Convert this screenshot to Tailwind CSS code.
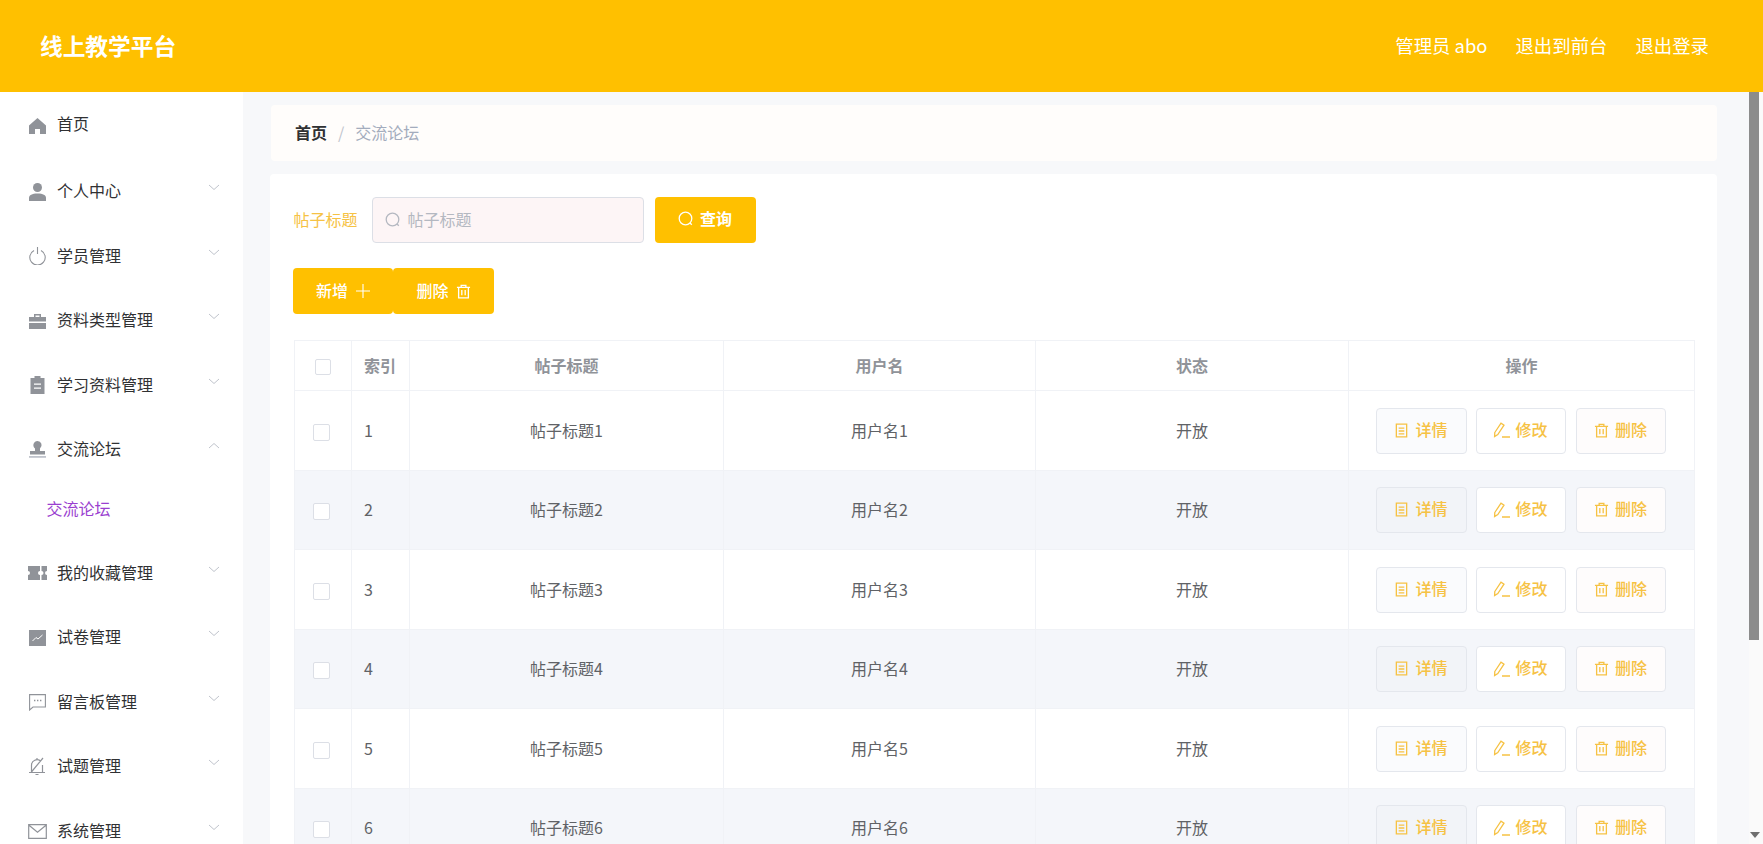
<!DOCTYPE html>
<html lang="zh">
<head>
<meta charset="utf-8">
<script src="https://cdn.jsdelivr.net/npm/@tailwindcss/browser@4"></script>
<title>线上教学平台</title>
</head>
<body class="m-0 h-[844px] overflow-hidden bg-[#f7f8fa] font-['Noto_Sans_CJK_SC','Noto_Sans',sans-serif] text-[16px]">
<svg class="hidden">
  <symbol id="doc" viewBox="0 0 16 16"><path d="M2.500 1.200h11v13.600h-11zM5 5.500h6M5 8.500h6M5 11.500h6" fill="none" stroke="currentColor" stroke-width="1.400"/></symbol>
  <symbol id="edit" viewBox="0 0 18 16"><path d="M1.800 10.500 8 1.200l3 2-6.200 9.300-3.200 2zM9 15h8" fill="none" stroke="currentColor" stroke-width="1.300"/></symbol>
  <symbol id="trash" viewBox="0 0 16 16"><path d="M1 3.500h14M5.500 3.500v-2h5v2M2.800 3.500v11.300h10.400V3.500M6.200 6.500v5.500M9.800 6.500v5.500" fill="none" stroke="currentColor" stroke-width="1.400"/></symbol>
  <symbol id="search" viewBox="0 0 16 16"><circle cx="7.500" cy="7.500" r="6.300" fill="none" stroke="currentColor" stroke-width="1.300"/><path d="m12 12 1.800 1.800" stroke="currentColor" stroke-width="1.300"/></symbol>
  <symbol id="chev" viewBox="0 0 12 7"><path d="M1 1l5 4.500L11 1" fill="none" stroke="currentColor" stroke-width="1"/></symbol>
</svg>

<header class="h-[92px] bg-[#ffc000] flex items-center justify-between pl-[40px] pr-[54px] text-white">
  <div class="text-[22.700px] font-bold mt-[1px]">线上教学平台</div>
  <div class="flex gap-[28px] text-[18.400px]"><span>管理员 abo</span><span>退出到前台</span><span>退出登录</span></div>
</header>

<div class="flex h-[752px]">
  <aside class="w-[243px] shrink-0 bg-white text-[#303133] overflow-hidden">
    <div class="h-[67px] pb-[2px] flex items-center pl-[29px]">
      <svg class="w-[17px] h-[17px] mr-[11px] mt-[2px] text-[#909399]" viewBox="0 0 17 17"><path d="M8.500 1 17 8.500V17h-6v-5H6v5H0V8.500z" fill="currentColor"/></svg><span class="mb-[3px]">首页</span>
    </div>
    <div class="h-[65px] flex items-center pl-[29px] pr-[23px]">
      <svg class="w-[17px] h-[18px] mr-[11px] text-[#909399]" viewBox="0 0 17 18"><circle cx="8.500" cy="4.500" r="4.500" fill="currentColor"/><path d="M0 18v-3c0-3 3-4.500 8.500-4.500S17 12 17 15v3z" fill="currentColor"/></svg>
      <span class="flex-1 mb-[3px]">个人中心</span><svg class="w-[12px] h-[7px] mb-[8px] text-[#c0c4cc]"><use href="#chev"/></svg>
    </div>
    <div class="h-[64px] flex items-center pl-[29px] pr-[23px]">
      <svg class="w-[17px] h-[18px] mr-[11px] text-[#909399]" viewBox="0 0 17 18"><path d="M5 3.500a7.700 7.700 0 1 0 7 0M8.500 0v7" fill="none" stroke="currentColor" stroke-width="1.100"/></svg>
      <span class="flex-1 mb-[3px]">学员管理</span><svg class="w-[12px] h-[7px] mb-[8px] text-[#c0c4cc]"><use href="#chev"/></svg>
    </div>
    <div class="h-[65px] flex items-center pl-[29px] pr-[23px]">
      <svg class="w-[17px] h-[16px] mr-[11px] text-[#909399]" viewBox="0 0 17 16"><path d="M5 4V1h7v3h-1.500V2.500h-4V4zM0 4h17v4.500H0zM0 10h17v6H0z" fill="currentColor"/></svg>
      <span class="flex-1 mb-[3px]">资料类型管理</span><svg class="w-[12px] h-[7px] mb-[8px] text-[#c0c4cc]"><use href="#chev"/></svg>
    </div>
    <div class="h-[64px] flex items-center pl-[29px] pr-[23px]">
      <svg class="w-[17px] h-[18px] mr-[11px] text-[#909399]" viewBox="0 0 16 18"><path d="M1 2h4V0h6v2h4v16H1zM4.500 7.500v1.300h7V7.500zm0 4v1.300h7v-1.300z" fill="currentColor" fill-rule="evenodd"/></svg>
      <span class="flex-1 mb-[3px]">学习资料管理</span><svg class="w-[12px] h-[7px] mb-[8px] text-[#c0c4cc]"><use href="#chev"/></svg>
    </div>
    <div class="h-[65px] flex items-center pl-[29px] pr-[23px]">
      <svg class="w-[17px] h-[17px] mr-[11px] text-[#909399]" viewBox="0 0 17 17"><path d="M8.500 0a4.200 4.200 0 0 1 2.500 7.500v2.500h5v3.500H1V10h5V7.500A4.200 4.200 0 0 1 8.500 0z" fill="currentColor"/><path d="M0 15h17v1.800H0z" fill="#c0c4cc"/></svg>
      <span class="flex-1 mb-[3px]">交流论坛</span><svg class="w-[12px] h-[7px] mb-[8px] text-[#c0c4cc] rotate-180"><use href="#chev"/></svg>
    </div>
    <div class="h-[59px] pb-[8px] flex items-center pl-[46.500px] text-[#9a3fd0]">交流论坛</div>
    <div class="h-[64px] flex items-center pl-[28px] pr-[23px]">
      <svg class="w-[19px] h-[14px] mr-[10px] text-[#909399]" viewBox="0 0 19 14"><path d="M0 0h12v5a2 2 0 0 0 0 4v5H0V9a2 2 0 0 0 0-4zM13.500 0H19v5a2 2 0 0 0 0 4v5h-5.500V9a2 2 0 0 0 0-4z" fill="currentColor"/></svg>
      <span class="flex-1 mb-[3px]">我的收藏管理</span><svg class="w-[12px] h-[7px] mb-[8px] text-[#c0c4cc]"><use href="#chev"/></svg>
    </div>
    <div class="h-[65px] flex items-center pl-[29px] pr-[23px]">
      <svg class="w-[17px] h-[16px] mr-[11px] text-[#909399]" viewBox="0 0 17 16"><rect width="17" height="16" fill="currentColor"/><path d="m3.500 11 3.500-3.500 2 1.500L13.500 5" fill="none" stroke="#fff" stroke-width="1"/></svg>
      <span class="flex-1 mb-[3px]">试卷管理</span><svg class="w-[12px] h-[7px] mb-[8px] text-[#c0c4cc]"><use href="#chev"/></svg>
    </div>
    <div class="h-[64px] flex items-center pl-[29px] pr-[23px]">
      <svg class="w-[17px] h-[17px] mr-[11px] text-[#909399]" viewBox="0 0 17 17"><path d="M.6.600h15.800v12.400H4l-3.400 3z" fill="none" stroke="currentColor" stroke-width="1.100"/><path d="M5 6.500h1.400M8 6.500h1.400M11 6.500h1.400" stroke="currentColor" stroke-width="1.400"/></svg>
      <span class="flex-1 mb-[3px]">留言板管理</span><svg class="w-[12px] h-[7px] mb-[8px] text-[#c0c4cc]"><use href="#chev"/></svg>
    </div>
    <div class="h-[65px] flex items-center pl-[28px] pr-[23px]">
      <svg class="w-[18px] h-[19px] mr-[11px] text-[#909399]" viewBox="0 0 18 19"><path d="M1 15.500h16M3.500 15.500V8a5.500 5.500 0 0 1 9-4M14.500 8v7.500M7.500 17.500h3M9 1v1.500M3 15.500 15 1" fill="none" stroke="currentColor" stroke-width="1.200"/></svg>
      <span class="flex-1 mb-[3px]">试题管理</span><svg class="w-[12px] h-[7px] mb-[8px] text-[#c0c4cc]"><use href="#chev"/></svg>
    </div>
    <div class="h-[65px] flex items-center pl-[28px] pr-[23px]">
      <svg class="w-[19px] h-[15px] mr-[10px] text-[#909399]" viewBox="0 0 19 15"><path d="M.7.700h17.600v13.600H.7zM1 1.200l8.500 7 8.500-7" fill="none" stroke="currentColor" stroke-width="1.200"/></svg>
      <span class="flex-1 mb-[3px]">系统管理</span><svg class="w-[12px] h-[7px] mb-[8px] text-[#c0c4cc]"><use href="#chev"/></svg>
    </div>
  </aside>

  <main class="flex-1 min-w-0 pl-[27px] pr-[32px] pt-[13px] overflow-hidden">
    <div class="h-[56px] bg-[#fffdfb] rounded-[4px] flex items-center pl-[24px] pb-[2px] ml-[1px]">
      <span class="font-bold text-[#303133]">首页</span><span class="mx-[11px] text-[#c0c4cc]">/</span><span class="text-[#a3acbd]">交流论坛</span>
    </div>
    <section class="mt-[13px] bg-white h-[700px] pl-[24px] pr-[23px] pt-[23px] rounded-[4px]">
      <div class="flex items-center h-[46px]">
        <label class="text-[#f6c244] mr-[14px] -ml-[0.500px] mb-[2px]">帖子标题</label>
        <div class="w-[272px] h-[46px] box-border border border-[#dcdfe6] rounded-[4px] bg-[#fdf5f6] flex items-center pl-[12px] text-[#b4b8c1]">
          <svg class="w-[16px] h-[16px] mr-[7px]"><use href="#search"/></svg><span class="mb-[3px]">帖子标题</span>
        </div>
        <button class="ml-[11px] w-[101px] h-[46px] rounded-[4px] bg-[#ffc000] text-white font-bold flex items-center justify-center gap-[6px]">
          <svg class="w-[16px] h-[16px] mb-[2px]"><use href="#search"/></svg><span class="mb-[5px]">查询</span>
        </button>
      </div>
      <div class="flex mt-[25px] h-[46px] -ml-[1px]">
        <button class="w-[100px] h-[46px] rounded-[4px] bg-[#ffc000] text-white font-medium flex items-center justify-center gap-[8px]"><span class="mb-[3px]">新增</span>
          <svg class="w-[14px] h-[14px]" viewBox="0 0 14 14"><path d="M7 0v14M0 7h14" stroke="currentColor" stroke-width="1.100"/></svg>
        </button>
        <button class="w-[101px] h-[46px] rounded-[4px] bg-[#ffc000] text-white font-medium flex items-center justify-center gap-[7px]"><span class="mb-[3px]">删除</span>
          <svg class="w-[15px] h-[15px]"><use href="#trash"/></svg>
        </button>
      </div>
      <table class="mt-[26px] w-[1400px] table-fixed border-collapse text-[#606266] text-center">
        <colgroup>
          <col class="w-[57px]"><col class="w-[58px]"><col class="w-[314px]"><col class="w-[312px]"><col class="w-[313px]"><col class="w-[346px]">
        </colgroup>
        <thead class="text-[#909399] font-bold">
          <tr class="h-[50px]">
            <th class="border border-[#f0f2f6] font-bold"><span class="block w-[16px] h-[16px] mx-auto mt-[2px] border border-[#dcdfe6] rounded-[2px]"></span></th>
            <th class="border border-[#f0f2f6] font-bold text-left pl-[12px] pb-[1px]">索引</th>
            <th class="border border-[#f0f2f6] font-bold pb-[1px]">帖子标题</th>
            <th class="border border-[#f0f2f6] font-bold pb-[1px]">用户名</th>
            <th class="border border-[#f0f2f6] font-bold pb-[1px]">状态</th>
            <th class="border border-[#f0f2f6] font-bold pb-[1px]">操作</th>
          </tr>
        </thead>
        <tbody>
          <tr class="h-[80px]">
            <td class="border border-[#f0f2f6]"><span class="block w-[17px] h-[17px] ml-[18px] mt-[3px] border border-[#dcdfe6] rounded-[2px] bg-white"></span></td>
            <td class="border border-[#f0f2f6] text-left pl-[12px] pb-[2px]">1</td><td class="border border-[#f0f2f6] pb-[2px]">帖子标题1</td><td class="border border-[#f0f2f6] pb-[2px]">用户名1</td><td class="border border-[#f0f2f6] pb-[2px]">开放</td>
            <td class="border border-[#f0f2f6]"><div class="flex justify-center -ml-[2px] text-[#f6c244] font-medium">
              <span class="w-[91px] h-[46px] rounded-[4px] border border-[#e4e7ed] bg-[#fafbfd] flex items-center justify-center gap-[6px]"><svg class="w-[15px] h-[15px] mb-[1px]"><use href="#doc"/></svg><span class="mb-[4px]">详情</span></span>
              <span class="w-[90px] ml-[9px] h-[46px] rounded-[4px] border border-[#e4e7ed] bg-white flex items-center justify-center gap-[4px]"><svg class="w-[18px] h-[16px] mb-[1px]"><use href="#edit"/></svg><span class="mb-[4px]">修改</span></span>
              <span class="w-[90px] ml-[10px] h-[46px] rounded-[4px] border border-[#e4e7ed] bg-[#fefcfc] flex items-center justify-center gap-[6px]"><svg class="w-[15px] h-[15px] mb-[1px]"><use href="#trash"/></svg><span class="mb-[4px]">删除</span></span>
            </div></td>
          </tr>
          <tr class="h-[79px] bg-[#f4f6fa]">
            <td class="border border-[#f0f2f6]"><span class="block w-[17px] h-[17px] ml-[18px] mt-[3px] border border-[#dcdfe6] rounded-[2px] bg-white"></span></td>
            <td class="border border-[#f0f2f6] text-left pl-[12px] pb-[2px]">2</td><td class="border border-[#f0f2f6] pb-[2px]">帖子标题2</td><td class="border border-[#f0f2f6] pb-[2px]">用户名2</td><td class="border border-[#f0f2f6] pb-[2px]">开放</td>
            <td class="border border-[#f0f2f6]"><div class="flex justify-center -ml-[2px] text-[#f6c244] font-medium">
              <span class="w-[91px] h-[46px] rounded-[4px] border border-[#e4e7ed] bg-[#f2f4f8] flex items-center justify-center gap-[6px]"><svg class="w-[15px] h-[15px] mb-[1px]"><use href="#doc"/></svg><span class="mb-[4px]">详情</span></span>
              <span class="w-[90px] ml-[9px] h-[46px] rounded-[4px] border border-[#e4e7ed] bg-white flex items-center justify-center gap-[4px]"><svg class="w-[18px] h-[16px] mb-[1px]"><use href="#edit"/></svg><span class="mb-[4px]">修改</span></span>
              <span class="w-[90px] ml-[10px] h-[46px] rounded-[4px] border border-[#e4e7ed] bg-[#fefcfc] flex items-center justify-center gap-[6px]"><svg class="w-[15px] h-[15px] mb-[1px]"><use href="#trash"/></svg><span class="mb-[4px]">删除</span></span>
            </div></td>
          </tr>
          <tr class="h-[80px]">
            <td class="border border-[#f0f2f6]"><span class="block w-[17px] h-[17px] ml-[18px] mt-[3px] border border-[#dcdfe6] rounded-[2px] bg-white"></span></td>
            <td class="border border-[#f0f2f6] text-left pl-[12px] pb-[2px]">3</td><td class="border border-[#f0f2f6] pb-[2px]">帖子标题3</td><td class="border border-[#f0f2f6] pb-[2px]">用户名3</td><td class="border border-[#f0f2f6] pb-[2px]">开放</td>
            <td class="border border-[#f0f2f6]"><div class="flex justify-center -ml-[2px] text-[#f6c244] font-medium">
              <span class="w-[91px] h-[46px] rounded-[4px] border border-[#e4e7ed] bg-[#fafbfd] flex items-center justify-center gap-[6px]"><svg class="w-[15px] h-[15px] mb-[1px]"><use href="#doc"/></svg><span class="mb-[4px]">详情</span></span>
              <span class="w-[90px] ml-[9px] h-[46px] rounded-[4px] border border-[#e4e7ed] bg-white flex items-center justify-center gap-[4px]"><svg class="w-[18px] h-[16px] mb-[1px]"><use href="#edit"/></svg><span class="mb-[4px]">修改</span></span>
              <span class="w-[90px] ml-[10px] h-[46px] rounded-[4px] border border-[#e4e7ed] bg-[#fefcfc] flex items-center justify-center gap-[6px]"><svg class="w-[15px] h-[15px] mb-[1px]"><use href="#trash"/></svg><span class="mb-[4px]">删除</span></span>
            </div></td>
          </tr>
          <tr class="h-[79px] bg-[#f4f6fa]">
            <td class="border border-[#f0f2f6]"><span class="block w-[17px] h-[17px] ml-[18px] mt-[3px] border border-[#dcdfe6] rounded-[2px] bg-white"></span></td>
            <td class="border border-[#f0f2f6] text-left pl-[12px] pb-[2px]">4</td><td class="border border-[#f0f2f6] pb-[2px]">帖子标题4</td><td class="border border-[#f0f2f6] pb-[2px]">用户名4</td><td class="border border-[#f0f2f6] pb-[2px]">开放</td>
            <td class="border border-[#f0f2f6]"><div class="flex justify-center -ml-[2px] text-[#f6c244] font-medium">
              <span class="w-[91px] h-[46px] rounded-[4px] border border-[#e4e7ed] bg-[#f2f4f8] flex items-center justify-center gap-[6px]"><svg class="w-[15px] h-[15px] mb-[1px]"><use href="#doc"/></svg><span class="mb-[4px]">详情</span></span>
              <span class="w-[90px] ml-[9px] h-[46px] rounded-[4px] border border-[#e4e7ed] bg-white flex items-center justify-center gap-[4px]"><svg class="w-[18px] h-[16px] mb-[1px]"><use href="#edit"/></svg><span class="mb-[4px]">修改</span></span>
              <span class="w-[90px] ml-[10px] h-[46px] rounded-[4px] border border-[#e4e7ed] bg-[#fefcfc] flex items-center justify-center gap-[6px]"><svg class="w-[15px] h-[15px] mb-[1px]"><use href="#trash"/></svg><span class="mb-[4px]">删除</span></span>
            </div></td>
          </tr>
          <tr class="h-[80px]">
            <td class="border border-[#f0f2f6]"><span class="block w-[17px] h-[17px] ml-[18px] mt-[3px] border border-[#dcdfe6] rounded-[2px] bg-white"></span></td>
            <td class="border border-[#f0f2f6] text-left pl-[12px] pb-[2px]">5</td><td class="border border-[#f0f2f6] pb-[2px]">帖子标题5</td><td class="border border-[#f0f2f6] pb-[2px]">用户名5</td><td class="border border-[#f0f2f6] pb-[2px]">开放</td>
            <td class="border border-[#f0f2f6]"><div class="flex justify-center -ml-[2px] text-[#f6c244] font-medium">
              <span class="w-[91px] h-[46px] rounded-[4px] border border-[#e4e7ed] bg-[#fafbfd] flex items-center justify-center gap-[6px]"><svg class="w-[15px] h-[15px] mb-[1px]"><use href="#doc"/></svg><span class="mb-[4px]">详情</span></span>
              <span class="w-[90px] ml-[9px] h-[46px] rounded-[4px] border border-[#e4e7ed] bg-white flex items-center justify-center gap-[4px]"><svg class="w-[18px] h-[16px] mb-[1px]"><use href="#edit"/></svg><span class="mb-[4px]">修改</span></span>
              <span class="w-[90px] ml-[10px] h-[46px] rounded-[4px] border border-[#e4e7ed] bg-[#fefcfc] flex items-center justify-center gap-[6px]"><svg class="w-[15px] h-[15px] mb-[1px]"><use href="#trash"/></svg><span class="mb-[4px]">删除</span></span>
            </div></td>
          </tr>
          <tr class="h-[79px] bg-[#f4f6fa]">
            <td class="border border-[#f0f2f6]"><span class="block w-[17px] h-[17px] ml-[18px] mt-[3px] border border-[#dcdfe6] rounded-[2px] bg-white"></span></td>
            <td class="border border-[#f0f2f6] text-left pl-[12px] pb-[2px]">6</td><td class="border border-[#f0f2f6] pb-[2px]">帖子标题6</td><td class="border border-[#f0f2f6] pb-[2px]">用户名6</td><td class="border border-[#f0f2f6] pb-[2px]">开放</td>
            <td class="border border-[#f0f2f6]"><div class="flex justify-center -ml-[2px] text-[#f6c244] font-medium">
              <span class="w-[91px] h-[46px] rounded-[4px] border border-[#e4e7ed] bg-[#f2f4f8] flex items-center justify-center gap-[6px]"><svg class="w-[15px] h-[15px] mb-[1px]"><use href="#doc"/></svg><span class="mb-[4px]">详情</span></span>
              <span class="w-[90px] ml-[9px] h-[46px] rounded-[4px] border border-[#e4e7ed] bg-white flex items-center justify-center gap-[4px]"><svg class="w-[18px] h-[16px] mb-[1px]"><use href="#edit"/></svg><span class="mb-[4px]">修改</span></span>
              <span class="w-[90px] ml-[10px] h-[46px] rounded-[4px] border border-[#e4e7ed] bg-[#fefcfc] flex items-center justify-center gap-[6px]"><svg class="w-[15px] h-[15px] mb-[1px]"><use href="#trash"/></svg><span class="mb-[4px]">删除</span></span>
            </div></td>
          </tr>
        </tbody>
      </table>
    </section>
  </main>

  <div class="w-[14px] shrink-0 bg-[#fafafa] flex flex-col justify-between">
    <div class="w-[10px] h-[548px] bg-[#8c8c8c]"></div>
    <div class="w-0 h-0 ml-[1px] mb-[6px] border-x-[5px] border-t-[6px] border-x-transparent border-t-[#6f6f6f]"></div>
  </div>
</div>
</body>
</html>
